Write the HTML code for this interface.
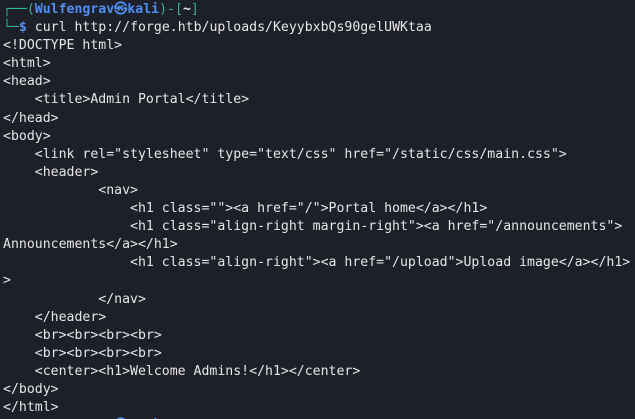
<!DOCTYPE html>
<html><head><style>
html,body{margin:0;background:#1d2029;width:635px;height:419px;overflow:hidden}
pre{margin:0;padding:1px 0 0 3px;font-family:"DejaVu Sans Mono","Liberation Mono",monospace;font-size:13.2px;line-height:18.1px;color:#e6e6e6;white-space:pre}
.t{color:#2fb39b}.b{color:#4f8ff2;font-weight:bold}
</style></head><body><pre><span class="t">┌──(</span><span class="b">Wulfengrav㉿kali</span><span class="t">)-[</span><b>~</b><span class="t">]</span>
<span class="t">└─</span><span class="b">$</span> curl http://forge.htb/uploads/KeyybxbQs90gelUWKtaa
&lt;!DOCTYPE html&gt;
&lt;html&gt;
&lt;head&gt;
    &lt;title&gt;Admin Portal&lt;/title&gt;
&lt;/head&gt;
&lt;body&gt;
    &lt;link rel="stylesheet" type="text/css" href="/static/css/main.css"&gt;
    &lt;header&gt;
            &lt;nav&gt;
                &lt;h1 class=""&gt;&lt;a href="/"&gt;Portal home&lt;/a&gt;&lt;/h1&gt;
                &lt;h1 class="align-right margin-right"&gt;&lt;a href="/announcements"&gt;
Announcements&lt;/a&gt;&lt;/h1&gt;
                &lt;h1 class="align-right"&gt;&lt;a href="/upload"&gt;Upload image&lt;/a&gt;&lt;/h1&gt;
&gt;
            &lt;/nav&gt;
    &lt;/header&gt;
    &lt;br&gt;&lt;br&gt;&lt;br&gt;&lt;br&gt;
    &lt;br&gt;&lt;br&gt;&lt;br&gt;&lt;br&gt;
    &lt;center&gt;&lt;h1&gt;Welcome Admins!&lt;/h1&gt;&lt;/center&gt;
&lt;/body&gt;
&lt;/html&gt;
<span class="t">┌──(</span><span class="b">Wulfengrav㉿kali</span><span class="t">)-[</span><b>~</b><span class="t">]</span></pre></body></html>
